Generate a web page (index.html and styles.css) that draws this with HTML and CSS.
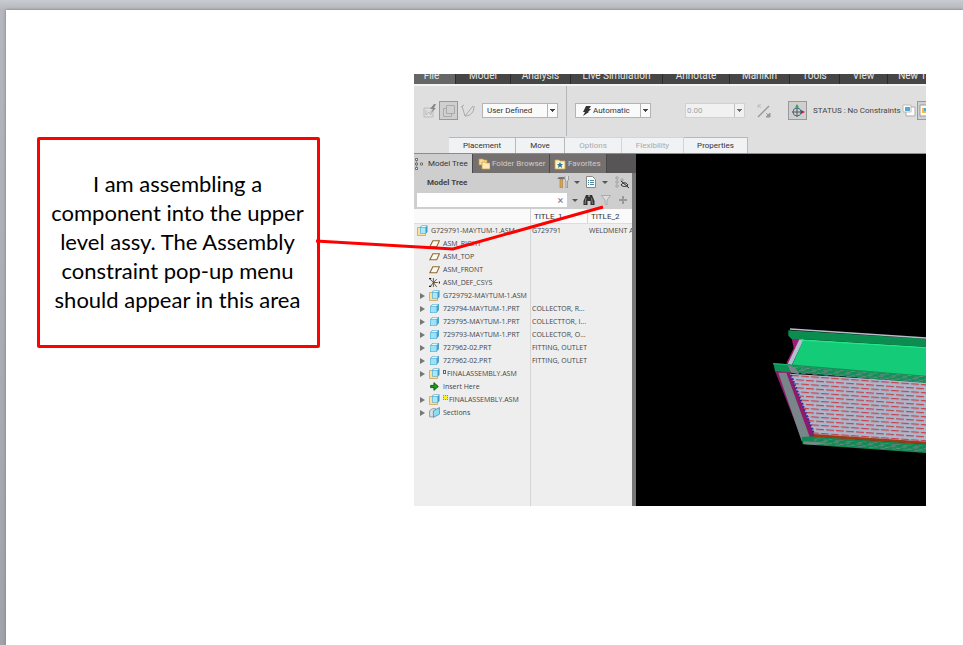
FILE: index.html
```html
<!DOCTYPE html>
<html lang="en">
<head>
    <meta charset="UTF-8">
    <meta name="viewport" content="width=device-width, initial-scale=1.0">
    <title>Assembly constraint menu</title>
    <link rel="stylesheet" href="styles.css">
</head>
<body>
    <svg class="sprite" aria-hidden="true">
        <symbol id="asm" viewBox="0 0 11 11">
            <path d="M.5 2.500h3v5h5v3h-8z" fill="#fbdf9c" stroke="#c9a560" stroke-width=".8"/>
            <path d="M3 2L4.500.5h6V7L9 8.500H3z" fill="#3f9cc4"/>
            <path d="M3.500 2.500h5v5.500h-5z" fill="#a8e8fb"/>
            <path d="M3.500 2L5 1h5L8.500 2z" fill="#e4faff"/>
        </symbol>
        <symbol id="prt" viewBox="0 0 11 11">
            <path d="M1 3.500L3.500 1H10v6L7.500 10H1z" fill="#4ba3cb"/>
            <path d="M1.500 3.800h6v5.700h-6z" fill="#9de2f8"/>
            <path d="M2 3.200l1.800-1.700h5.500L7.300 3.200z" fill="#e0f8ff"/>
        </symbol>
        <symbol id="plane" viewBox="0 0 10 10">
            <path d="M3.500 2.500h6l-2.500 5.500H.8z" fill="#fdf8ec" stroke="#8b6b35"/>
        </symbol>
        <symbol id="csys" viewBox="0 0 10 10">
            <path d="M4 1v8M4 5h4M1 2l3 3-3 4M4 5l3-3M4 5l3 4" fill="none" stroke="#6b5a40" stroke-width=".9"/>
            <path d="M0 1.500h2M0 8.500h2M9.500 4v2" stroke="#222"/>
        </symbol>
        <symbol id="insert" viewBox="0 0 10 10">
            <path d="M1.500 4h3V1.500L8.500 5 4.500 8.500V6h-3z" fill="#1f9a1f" stroke="#0a4d0a" stroke-width=".8"/>
        </symbol>
        <symbol id="section" viewBox="0 0 10 10">
            <path d="M.5 3.500L3 1.500h3v6L3 9H.5z" fill="#d8dfe2" stroke="#777" stroke-width=".6"/>
            <path d="M4 3.500L9.500.5v6L4 9.500z" fill="#8fdcf5" stroke="#357f9e" stroke-width=".6"/>
        </symbol>
        <symbol id="tree" viewBox="0 0 12 12">
            <path d="M2.500 3v6" stroke="#888" stroke-width=".7"/>
            <path d="M1.500.500h2v2h-2zM1.500 5h2v2h-2zM1.500 9.500h2v2h-2zM6.500 5h2v2h-2z" fill="#eee" stroke="#555" stroke-width=".8"/>
        </symbol>
    </svg>

    <main class="slide">
        <p class="callout">I am assembling a component into the upper level assy. The Assembly constraint pop-up menu should appear in this area</p>

        <section class="cad">
            <nav class="menu">
                <a class="file" href="#">File</a>
                <a class="model" href="#">Model</a>
                <a class="analysis" href="#">Analysis</a>
                <a class="simulation" href="#">Live Simulation</a>
                <a class="annotate" href="#">Annotate</a>
                <a class="manikin" href="#">Manikin</a>
                <a class="tools" href="#">Tools</a>
                <a class="view" href="#">View</a>
                <a class="new-tab" href="#">New Tab</a>
            </nav>

            <div class="ribbon">
                <div class="controls">
                    <div class="group placement">
                        <button class="tool" aria-label="Convert">
                            <svg viewBox="0 0 14 14"><path d="M1 4h9v9H1zM3 6v5l3-3 2 3V6" fill="none" stroke="#bbb"/><path d="M11 0L7 5h3L8 9l5-5h-2l2-4z" fill="#888"/></svg>
                        </button>
                        <button class="tool pressed" aria-label="Interface">
                            <svg viewBox="0 0 14 14"><path d="M4.500 1.500h8v8h-8zM4.500 4.500h-3v8h8v-3" fill="none" stroke="#aaa"/></svg>
                        </button>
                        <button class="tool" aria-label="Mechanism">
                            <svg viewBox="0 0 14 14"><path d="M1 2l3 10L12 2M4 12c6 0 9-4 9-10M0 3l3-2" fill="none" stroke="#aaa"/></svg>
                        </button>
                        <select class="drop defined" aria-label="Connection type"><option>User Defined</option></select>
                    </div>
                    <div class="group constraint">
                        <div class="auto">
                            <svg viewBox="0 0 10 10"><path d="M4 0h5L7 3h2L6 6h1L1 10l2-4H1z" fill="#333"/></svg>
                            <select class="drop automatic" aria-label="Constraint type"><option>Automatic</option></select>
                        </div>
                        <select class="drop offset" aria-label="Offset" disabled><option>0.00</option></select>
                        <button class="tool" aria-label="Flip">
                            <svg viewBox="0 0 14 14"><path d="M1 13L12 2" stroke="#999" stroke-width="1.500"/><path d="M1 4V1h3M1 1l3 3" fill="none" stroke="#bbb"/><path d="M13 9v4H9zM9 9l3 3" fill="#999" stroke="#999"/></svg>
                        </button>
                        <button class="tool pressed dragger" aria-label="3D dragger">
                            <svg viewBox="0 0 14 14"><circle cx="6" cy="8" r="4" fill="none" stroke="#38799b"/><path d="M6 13V2M1 8h11" stroke="#555"/><path d="M4 3.500L6 0l2 3.500z" fill="#4a9a4a"/><path d="M10 6l4 2-4 2z" fill="#c02020"/></svg>
                        </button>
                        <span class="status">STATUS : No Constraints</span>
                        <button class="tool window" aria-label="Separate window">
                            <svg viewBox="0 0 14 14"><path d="M4 3h9v9H4z" fill="#fff" stroke="#aaa"/><path d="M1 1h8v7H1z" fill="#fff" stroke="#bbb"/><path d="M3 3h5v4H3z" fill="#55aacb"/></svg>
                        </button>
                        <button class="tool pressed" aria-label="Assembly window">
                            <svg viewBox="0 0 14 14"><path d="M1 1h12v11H1z" fill="#fff" stroke="#999"/><path d="M3 4h5v5H3z" fill="#f2b84b"/><path d="M5 4h4v3H5z" fill="#55aacb"/></svg>
                        </button>
                    </div>
                </div>
                <div class="subtabs">
                    <button class="w-placement">Placement</button>
                    <button class="w-move">Move</button>
                    <button class="w-options" disabled>Options</button>
                    <button class="w-flex" disabled>Flexibility</button>
                    <button class="w-props">Properties</button>
                </div>
            </div>

            <div class="work">
                <aside class="navigator">
                    <div class="nav-tabs">
                        <button class="active"><svg viewBox="0 0 12 12"><use href="#tree"/></svg>Model Tree</button>
                        <button class="folders"><svg viewBox="0 0 12 12"><path d="M1 1h4l1 1h3v5H1z" fill="#f6dc9a" stroke="#c79a3d" stroke-width=".7"/><path d="M4 4h3l1 1h4v6H4z" fill="#ffe9b5" stroke="#c79a3d" stroke-width=".7"/></svg>Folder Browser</button>
                        <button class="favorites"><svg viewBox="0 0 12 12"><path d="M1 2h4l1 1h5v8H1z" fill="#fff2c9" stroke="#d0a548" stroke-width=".8"/><path d="M6 4l1 2h2L7.500 7.500 8 10 6 8.500 4 10l.5-2.500L3 6h2z" fill="#257ca1"/></svg>Favorites</button>
                    </div>
                    <div class="tree-title">
                        <h2>Model Tree</h2>
                        <button aria-label="Settings"><svg viewBox="0 0 12 12"><path d="M0 3l2-2h5l1 2z" fill="#777"/><path d="M3 3h2.500v9H3z" fill="#dda552" stroke="#9a6c2e" stroke-width=".5"/><path d="M8 0v4l1 1v7h1.500V5l1-1V0" fill="#ddd" stroke="#777" stroke-width=".6"/></svg></button>
                        <i class="arrow"></i>
                        <button class="list" aria-label="Show"><svg viewBox="0 0 12 12"><path d="M1.500.500h6l3 3v8h-9z" fill="#fff" stroke="#888"/><path d="M3 4.500h1M5 4.500h4M3 6.500h1M5 6.500h4M3 8.500h1M5 8.500h4" stroke="#4b8aa3"/></svg></button>
                        <i class="arrow"></i>
                        <button class="hide" aria-label="Hide items"><svg viewBox="0 0 14 12"><path d="M1 1h2v2H1zM1 5h2v2H1zM1 9h2v2H1zM6 3h2v2H6z" fill="#eee" stroke="#888" stroke-width=".7"/><path d="M6 9c2-3 5-3 7 0-2 2-5 2-7 0M6 5l8 7" fill="none" stroke="#222"/></svg></button>
                    </div>
                    <div class="search">
                        <div class="field">
                            <input type="text" aria-label="Search model tree">
                            <button aria-label="Clear">×</button>
                        </div>
                        <i class="arrow"></i>
                        <button aria-label="Find"><svg viewBox="0 0 12 12"><path d="M3 1h2.500v2h1V1H9l2.500 6v4H7.500V7h-3v4H.500V7z" fill="#333"/><path d="M3 4L2 10M8.500 4l1 6" stroke="#999" stroke-width=".8"/></svg></button>
                        <button aria-label="Filter"><svg viewBox="0 0 12 12"><path d="M1.500 1.500h9L7 6v5L5 9.500V6z" fill="#ddd" stroke="#aaa"/></svg></button>
                        <button aria-label="Add"><svg viewBox="0 0 12 12"><path d="M6 2v8M2 6h8" stroke="#999" stroke-width="2"/></svg></button>
                    </div>
                    <table>
                        <thead>
                            <tr><th class="name"></th><th>TITLE_1</th><th>TITLE_2</th></tr>
                        </thead>
                        <tbody>
                            <tr class="root"><td><svg><use href="#asm"/></svg>G729791-MAYTUM-1.ASM</td><td>G729791</td><td>WELDMENT A</td></tr>
                            <tr><td><svg><use href="#plane"/></svg>ASM_RIGHT</td><td></td><td></td></tr>
                            <tr><td><svg><use href="#plane"/></svg>ASM_TOP</td><td></td><td></td></tr>
                            <tr><td><svg><use href="#plane"/></svg>ASM_FRONT</td><td></td><td></td></tr>
                            <tr><td><svg><use href="#csys"/></svg>ASM_DEF_CSYS</td><td></td><td></td></tr>
                            <tr class="parent"><td><svg><use href="#asm"/></svg>G729792-MAYTUM-1.ASM</td><td></td><td></td></tr>
                            <tr class="parent"><td><svg><use href="#prt"/></svg>729794-MAYTUM-1.PRT</td><td>COLLECTOR, R...</td><td></td></tr>
                            <tr class="parent"><td><svg><use href="#prt"/></svg>729795-MAYTUM-1.PRT</td><td>COLLECTTOR, I...</td><td></td></tr>
                            <tr class="parent"><td><svg><use href="#prt"/></svg>729793-MAYTUM-1.PRT</td><td>COLLECTOR, O...</td><td></td></tr>
                            <tr class="parent"><td><svg><use href="#prt"/></svg>727962-02.PRT</td><td>FITTING, OUTLET</td><td></td></tr>
                            <tr class="parent"><td><svg><use href="#prt"/></svg>727962-02.PRT</td><td>FITTING, OUTLET</td><td></td></tr>
                            <tr class="parent"><td><svg><use href="#asm"/></svg><i class="packed"></i>FINALASSEMBLY.ASM</td><td></td><td></td></tr>
                            <tr><td><svg><use href="#insert"/></svg>Insert Here</td><td></td><td></td></tr>
                            <tr class="parent"><td><svg><use href="#asm"/></svg><i class="packed placing"></i>FINALASSEMBLY.ASM</td><td></td><td></td></tr>
                            <tr class="parent"><td><svg><use href="#section"/></svg>Sections</td><td></td><td></td></tr>
                        </tbody>
                    </table>
                </aside>

                <div class="viewport">
                    <svg viewBox="0 0 291 352" preserveAspectRatio="xMinYMin slice">
                        <defs>
                            <pattern id="slots" width="30" height="24" patternUnits="userSpaceOnUse" patternTransform="skewY(4)">
                                <rect width="30" height="24" fill="#a9b8cd"/>
                                <path d="M3 5h24M18 17h12M0 17h12" stroke="#c8404a" stroke-width="4"/>
                            </pattern>
                            <pattern id="mesh" width="34" height="13" patternUnits="userSpaceOnUse" patternTransform="skewY(4)">
                                <path d="M0 2h16M20 6h12M6 10h14" stroke="#75848a" stroke-width="3"/>
                            </pattern>
                        </defs>
                        <g transform="translate(129 166) scale(.3333)">
                            <path d="M80 55h25L70 133l-6-3 22-45z" fill="#a01c78"/>
                            <path d="M103 58h14L80 136l-12-3z" fill="#b4bfce"/>
                            <path d="M115 60l368 22v88L80 137z" fill="#14cb77"/>
                            <path d="M70 31l413 25v25L108 57H80l-10-10z" fill="#0c8d50"/>
                            <path d="M110 60l373 23" stroke="#25e58a" stroke-width="4"/>
                            <path d="M75 27l408 27" stroke="#b7bdcb" stroke-width="4"/>
                            <path d="M30 153h45l75 195-40 10z" fill="#8e1a6b"/>
                            <path d="M40 158h24l70 192-24 14z" fill="#788589"/>
                            <path d="M75 161l408 26v180l-335-22z" fill="url(#slots)"/>
                            <path d="M78 165l70 180" stroke="#2730a8" stroke-width="6" stroke-dasharray="5 5"/>
                            <path d="M25 130l45 3 413 34v22L75 157l-45-4z" fill="#0f9155"/>
                            <path d="M70 136l413 33v20L90 161z" fill="url(#mesh)"/>
                            <path d="M68 135l22 8 14 20-26-5z" fill="#7b8689"/>
                            <path d="M24 131l46 3" stroke="#18c273" stroke-width="3"/>
                            <path d="M110 351l37-2 336 23v27l-370-26z" fill="#108a52"/>
                            <path d="M150 355l333 22v19l-340-24z" fill="url(#mesh)"/>
                            <path d="M116 364l75 5-38 6-38-3z" fill="#7b8689"/>
                            <path d="M145 346l338 23" stroke="#9f3c16" stroke-width="8"/>
                        </g>
                    </svg>
                </div>
            </div>
        </section>

        <svg class="pointer" width="620" height="280"><path d="M310 231l137 8 150-42" fill="none" stroke="#f00" stroke-width="3"/></svg>
    </main>
</body>
</html>
```
FILE: styles.css
```css
* {
    box-sizing: border-box;
}
body {
    margin: 0;
    padding: 10px 0 0 6px;
    min-height: 100vh;
    background: linear-gradient(#c8ccd1, #b4b7bb 10px, #a0a3a7);
    font-family: "Open Sans", "Noto Sans", sans-serif;
    font-size: 8px;
    color: #444;
}
button, select, input {
    font: inherit;
    color: inherit;
    margin: 0;
    padding: 0;
    border: 0;
    background: none;
}
a {
    color: inherit;
    text-decoration: none;
}
.sprite {
    display: none;
}
.slide {
    position: relative;
    display: grid;
    grid-template-columns: 283px minmax(0, 1fr);
    column-gap: 94px;
    align-items: start;
    min-height: calc(100vh - 10px);
    padding: 64px 37px 0 31px;
    background: #fff;
    box-shadow: 0 0 3px #777b80;
}
.callout {
    margin: 63px 0 0;
    padding: 29px 4px 31px 2px;
    border: 3px solid #f00;
    border-radius: 2px;
    font-family: Lato, sans-serif;
    font-size: 22px;
    line-height: 29px;
    text-align: center;
    color: #000;
}
.pointer {
    position: absolute;
    left: 0;
    top: 0;
    pointer-events: none;
}

/* application window */
.cad {
    overflow: hidden;
    background: #000;
    font-family: Roboto, "Open Sans", sans-serif;
}
.menu {
    display: flex;
    height: 10px;
    overflow: hidden;
    background: #464646;
    color: #e8e8e8;
    font-size: 10px;
    line-height: 4px;
    white-space: nowrap;
}
.menu a {
    flex: none;
    border-right: 1px solid #2c2c2c;
    text-align: center;
}
.menu .file { width: 42px; background: #666; padding-right: 6px; }
.menu .model { width: 55px; }
.menu .analysis { width: 60px; }
.menu .simulation { width: 92px; }
.menu .annotate { width: 67px; }
.menu .manikin { width: 60px; }
.menu .tools { width: 50px; }
.menu .view { width: 48px; }
.menu .new-tab { width: 60px; }

.ribbon {
    border-top: 2px solid #f2f2f2;
    border-bottom: 1px solid #8c8c8c;
    background: #dfdfdf;
}
.controls {
    display: flex;
    height: 50px;
}
.group {
    display: flex;
    flex: none;
    align-items: center;
    padding-bottom: 1px;
}
.placement {
    width: 153px;
    padding-left: 6px;
    border-right: 1px solid #b5b5b5;
}
.constraint {
    padding-left: 8px;
}
.tool {
    display: flex;
    flex: none;
    align-items: center;
    justify-content: center;
    width: 19px;
    height: 19px;
}
.tool svg {
    width: 14px;
    height: 14px;
}
.tool.pressed {
    border: 1px solid #999;
    background: #cfcfcf;
}
.drop {
    height: 15px;
    padding-left: 4px;
    border: 1px solid #b4b4b4;
    appearance: none;
    color: #333;
    background:
        linear-gradient(#444, #444) right 2px top 5px / 5px 1px no-repeat,
        linear-gradient(#444, #444) right 3px top 6px / 3px 1px no-repeat,
        linear-gradient(#444, #444) right 4px top 7px / 1px 1px no-repeat,
        linear-gradient(#b4b4b4, #b4b4b4) right 9px top 0 / 1px 15px no-repeat,
        #fafafa;
}
.defined {
    width: 76px;
    margin-left: 5px;
}
.auto {
    display: grid;
    align-items: center;
    margin-right: 34px;
}
.auto > * {
    grid-area: 1 / 1;
}
.auto svg {
    z-index: 1;
    width: 10px;
    height: 10px;
    margin-left: 7px;
}
.automatic {
    width: 76px;
    padding-left: 17px;
}
.offset {
    width: 60px;
    margin-right: 9px;
    padding-left: 1px;
    border-color: #ccc;
    color: #888;
    opacity: .7;
}
.dragger {
    margin-left: 15px;
}
.status {
    margin-left: 6px;
    white-space: nowrap;
}
.window {
    width: 16px;
}
.subtabs {
    display: flex;
    height: 17px;
    padding: 1px 0 0 35px;
}
.subtabs button {
    border: 1px solid #b8b8b8;
    border-left: 0;
    border-bottom: 0;
    background: #f0f2f3;
    color: #333;
}
.subtabs button:disabled {
    border-color: #d4d4d4;
    color: #aaa;
}
.w-placement { width: 67px; }
.w-move { width: 49px; }
.w-options { width: 57px; }
.w-flex { width: 62px; }
.w-props { width: 64px; }

.work {
    display: flex;
}
.navigator {
    flex: none;
    width: 222px;
    height: 352px;
    border-right: 4px solid #777;
    background: #cecece;
}
.nav-tabs {
    display: flex;
    width: 222px;
    height: 19px;
    background: #575555;
}
.nav-tabs button {
    display: flex;
    align-items: center;
    gap: 2px;
    border-right: 1px solid #4a4848;
    background: #757070;
    color: #d0cccc;
    white-space: nowrap;
}
.nav-tabs svg {
    width: 12px;
    height: 12px;
}
.nav-tabs .active {
    width: 59px;
    background: #cecece;
    color: #333;
}
.nav-tabs .folders {
    width: 77px;
    padding-left: 5px;
}
.nav-tabs .favorites {
    width: 57px;
    padding-left: 4px;
}
.tree-title, .search {
    display: flex;
    align-items: center;
    height: 18px;
}
.tree-title {
    padding-left: 13px;
}
.tree-title h2 {
    flex: 1;
    margin: 0;
    font-size: 8px;
    font-weight: 700;
}
.tree-title button, .search > button {
    display: flex;
    width: 12px;
    height: 12px;
}
.tree-title .list {
    margin-left: 5px;
}
.tree-title .hide {
    width: 14px;
    margin-left: 7px;
    margin-right: 3px;
}
.arrow {
    flex: none;
    width: 0;
    margin-left: 5px;
    border: 3px solid transparent;
    border-top-color: #555;
    border-bottom: 0;
}
.search {
    padding: 0 3px;
}
.search > button {
    margin-left: 5px;
}
.field {
    display: flex;
    width: 152px;
    height: 14px;
    background: #fff;
}
.field input {
    flex: 1;
    min-width: 0;
    outline: 0;
}
.field button {
    width: 13px;
    color: #777;
    font-size: 11px;
    line-height: 13px;
}

/* model tree */
table {
    width: 218px;
    height: 297px;
    border-collapse: collapse;
    background: #eee;
    font-family: "Open Sans", "Noto Sans", sans-serif;
    font-size: 7px;
    line-height: 13px;
}
table, thead, tbody {
    display: block;
}
thead {
    height: 15px;
    background: #fafafa;
    border-bottom: 1px solid #ddd;
}
th {
    padding: 1px 0 0 3px;
    border-left: 1px solid #d5d5d5;
    font-family: Roboto, "Open Sans", sans-serif;
    font-size: 8px;
    font-weight: 400;
    text-align: left;
    color: #333;
}
.name {
    border-left: 0;
}
tr {
    display: grid;
    grid-template-columns: 116px 57px 45px;
    height: 13px;
}
thead tr {
    height: 14px;
}
tbody {
    height: 282px;
    background: linear-gradient(#d5d5d5, #d5d5d5) 116px 0 / 1px 100% no-repeat;
}
td {
    display: flex;
    align-items: center;
    overflow: hidden;
    padding: 0 0 0 2px;
    white-space: nowrap;
}
td:first-child {
    padding-left: 15px;
}
.root td:first-child {
    padding-left: 3px;
}
.parent td:first-child {
    padding-left: 6px;
}
.parent td:first-child::before {
    content: "";
    margin-right: 4px;
    border: 3px solid transparent;
    border-left: 5px solid #777;
    border-right: 0;
}
td svg {
    flex: none;
    width: 11px;
    height: 11px;
    margin-right: 3px;
}
.packed {
    width: 3px;
    height: 4px;
    margin: 0 1px 4px 0;
    border: 1px solid #666;
}
.placing {
    width: 5px;
    height: 5px;
    border: 1px dotted #a0a000;
    background: #f4ef20;
}

.viewport {
    flex: 1;
    min-width: 0;
    overflow: hidden;
    background: #000;
}
.viewport svg {
    display: block;
    width: 100%;
    height: 352px;
}
```
